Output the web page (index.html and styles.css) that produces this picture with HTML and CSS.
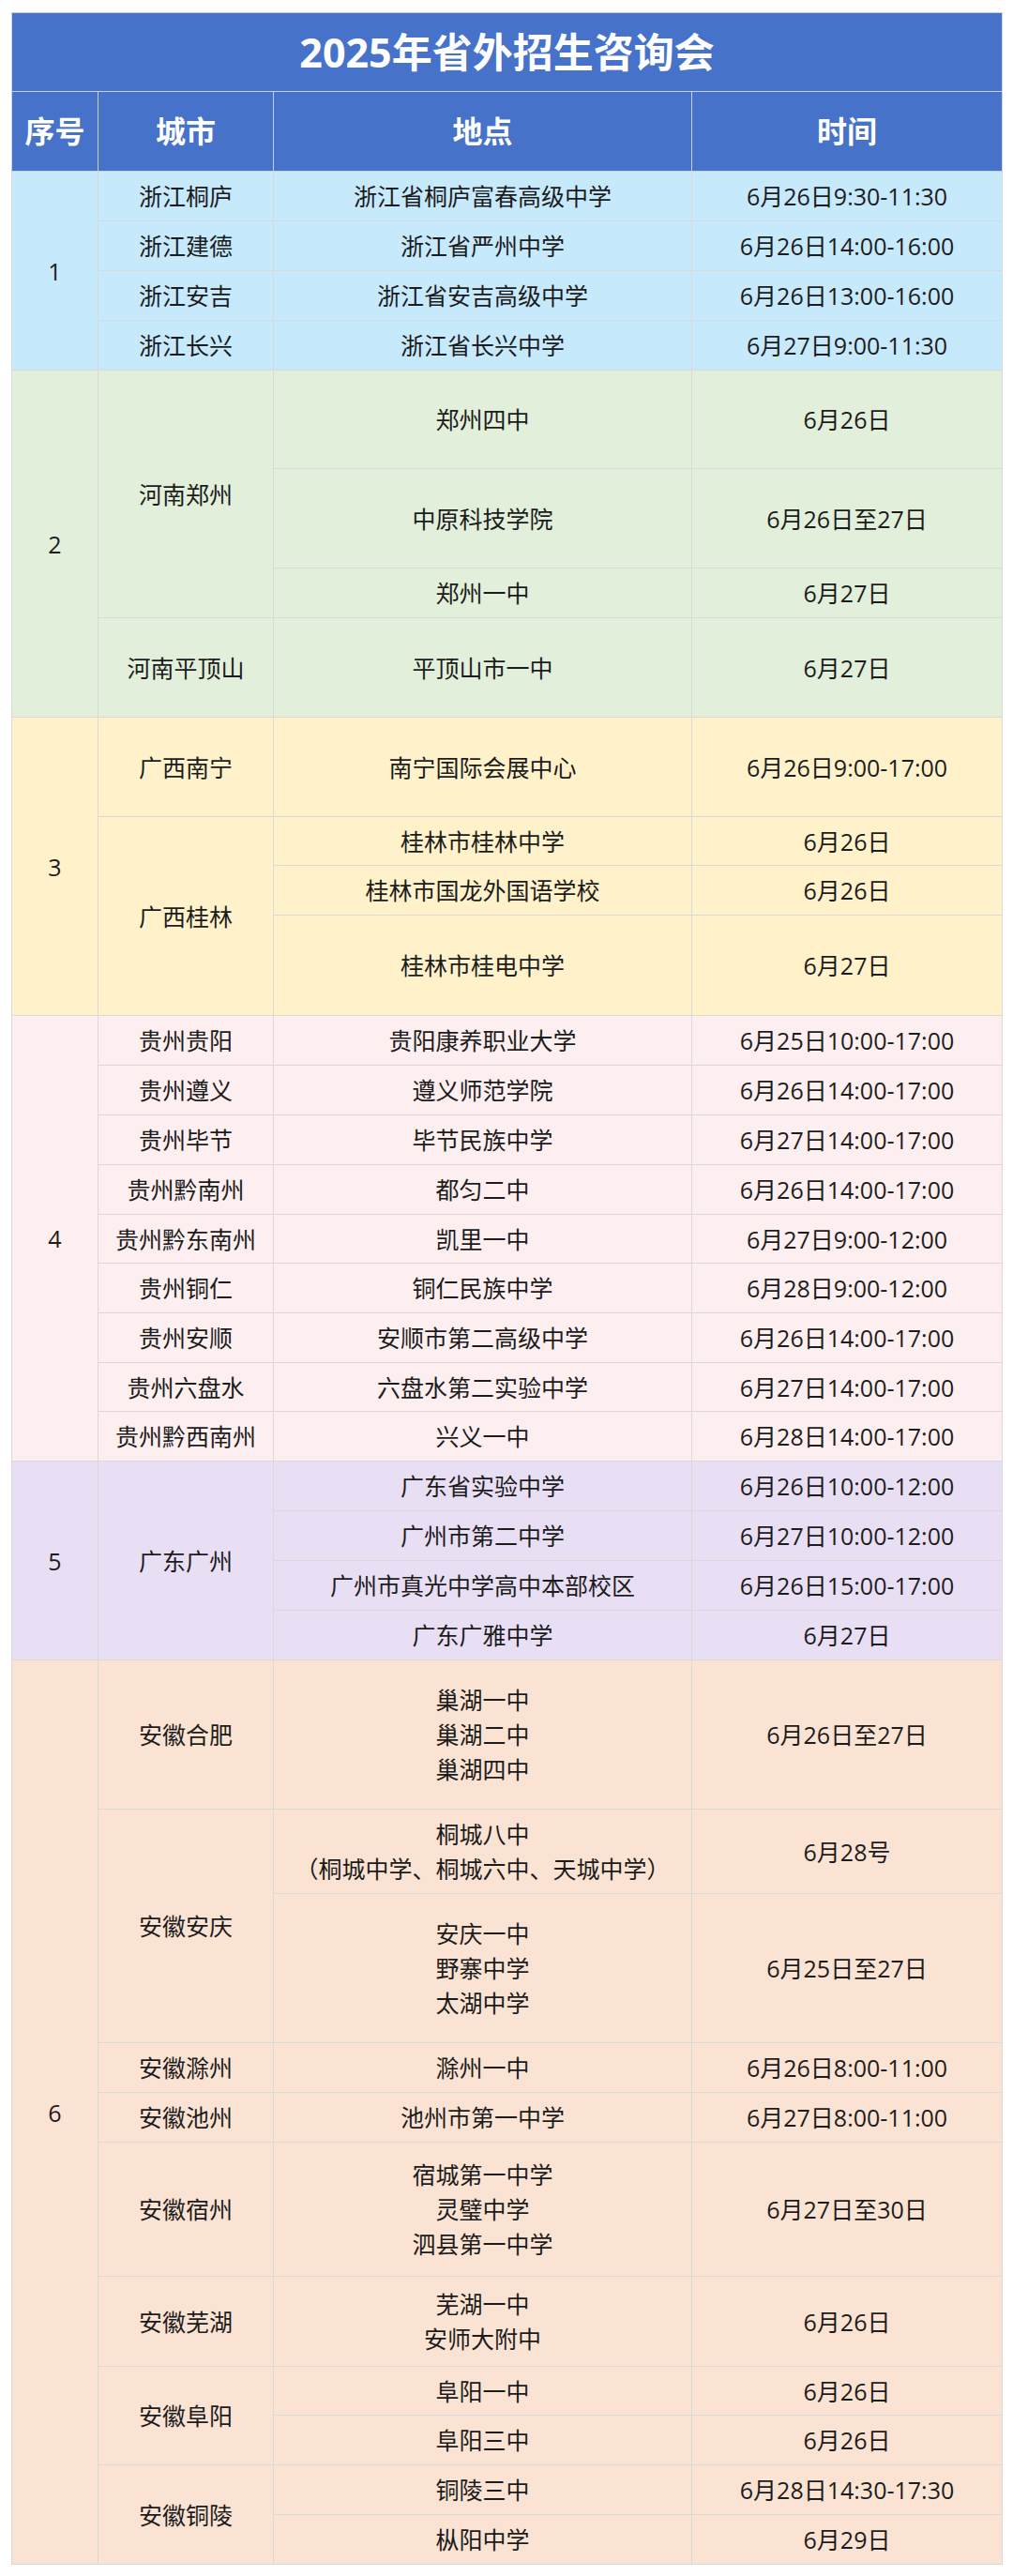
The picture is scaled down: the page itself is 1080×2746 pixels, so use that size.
FILE: index.html
```html
<!DOCTYPE html>
<html lang="zh-CN">
<head>
<meta charset="utf-8">
<title>2025年省外招生咨询会</title>
<link rel="stylesheet" href="styles.css">
</head>
<body>
<table class="sheet">
  <colgroup>
    <col class="c-no">
    <col class="c-city">
    <col class="c-place">
    <col class="c-time">
  </colgroup>
  <thead>
    <tr class="r-title"><th colspan="4" class="title">2025年省外招生咨询会</th></tr>
    <tr class="r-head"><th>序号</th><th>城市</th><th>地点</th><th>时间</th></tr>
  </thead>
  <tbody class="g1">
    <tr class="h53"><td rowspan="4">1</td><td>浙江桐庐</td><td>浙江省桐庐富春高级中学</td><td>6月26日9:30-11:30</td></tr>
    <tr class="h53"><td>浙江建德</td><td>浙江省严州中学</td><td>6月26日14:00-16:00</td></tr>
    <tr class="h53"><td>浙江安吉</td><td>浙江省安吉高级中学</td><td>6月26日13:00-16:00</td></tr>
    <tr class="h53"><td>浙江长兴</td><td>浙江省长兴中学</td><td>6月27日9:00-11:30</td></tr>
  </tbody>
  <tbody class="g2">
    <tr class="h105"><td rowspan="4">2</td><td rowspan="3">河南郑州</td><td>郑州四中</td><td>6月26日</td></tr>
    <tr class="h106"><td>中原科技学院</td><td>6月26日至27日</td></tr>
    <tr class="h53"><td>郑州一中</td><td>6月27日</td></tr>
    <tr class="h106"><td>河南平顶山</td><td>平顶山市一中</td><td>6月27日</td></tr>
  </tbody>
  <tbody class="g3">
    <tr class="h106"><td rowspan="4">3</td><td>广西南宁</td><td>南宁国际会展中心</td><td>6月26日9:00-17:00</td></tr>
    <tr class="h52"><td rowspan="3">广西桂林</td><td>桂林市桂林中学</td><td>6月26日</td></tr>
    <tr class="h53"><td>桂林市国龙外国语学校</td><td>6月26日</td></tr>
    <tr class="h107"><td>桂林市桂电中学</td><td>6月27日</td></tr>
  </tbody>
  <tbody class="g4">
    <tr class="h53"><td rowspan="9">4</td><td>贵州贵阳</td><td>贵阳康养职业大学</td><td>6月25日10:00-17:00</td></tr>
    <tr class="h53"><td>贵州遵义</td><td>遵义师范学院</td><td>6月26日14:00-17:00</td></tr>
    <tr class="h53"><td>贵州毕节</td><td>毕节民族中学</td><td>6月27日14:00-17:00</td></tr>
    <tr class="h53"><td>贵州黔南州</td><td>都匀二中</td><td>6月26日14:00-17:00</td></tr>
    <tr class="h52"><td>贵州黔东南州</td><td>凯里一中</td><td>6月27日9:00-12:00</td></tr>
    <tr class="h53"><td>贵州铜仁</td><td>铜仁民族中学</td><td>6月28日9:00-12:00</td></tr>
    <tr class="h53"><td>贵州安顺</td><td>安顺市第二高级中学</td><td>6月26日14:00-17:00</td></tr>
    <tr class="h52"><td>贵州六盘水</td><td>六盘水第二实验中学</td><td>6月27日14:00-17:00</td></tr>
    <tr class="h53"><td>贵州黔西南州</td><td>兴义一中</td><td>6月28日14:00-17:00</td></tr>
  </tbody>
  <tbody class="g5">
    <tr class="h53"><td rowspan="4">5</td><td rowspan="4">广东广州</td><td>广东省实验中学</td><td>6月26日10:00-12:00</td></tr>
    <tr class="h53"><td>广州市第二中学</td><td>6月27日10:00-12:00</td></tr>
    <tr class="h53"><td>广州市真光中学高中本部校区</td><td>6月26日15:00-17:00</td></tr>
    <tr class="h53"><td>广东广雅中学</td><td>6月27日</td></tr>
  </tbody>
  <tbody class="g6">
    <tr class="h159"><td rowspan="11">6</td><td>安徽合肥</td><td class="ml">巢湖一中<br>巢湖二中<br>巢湖四中</td><td>6月26日至27日</td></tr>
    <tr class="h90"><td rowspan="2">安徽安庆</td><td class="ml">桐城八中<br>（桐城中学、桐城六中、天城中学）</td><td>6月28号</td></tr>
    <tr class="h159"><td class="ml">安庆一中<br>野寨中学<br>太湖中学</td><td>6月25日至27日</td></tr>
    <tr class="h53"><td>安徽滁州</td><td>滁州一中</td><td>6月26日8:00-11:00</td></tr>
    <tr class="h53"><td>安徽池州</td><td>池州市第一中学</td><td>6月27日8:00-11:00</td></tr>
    <tr class="h143"><td>安徽宿州</td><td class="ml">宿城第一中学<br>灵璧中学<br>泗县第一中学</td><td>6月27日至30日</td></tr>
    <tr class="h96"><td>安徽芜湖</td><td class="ml">芜湖一中<br>安师大附中</td><td>6月26日</td></tr>
    <tr class="h52"><td rowspan="2">安徽阜阳</td><td>阜阳一中</td><td>6月26日</td></tr>
    <tr class="h53"><td>阜阳三中</td><td>6月26日</td></tr>
    <tr class="h53"><td rowspan="2">安徽铜陵</td><td>铜陵三中</td><td>6月28日14:30-17:30</td></tr>
    <tr class="h53"><td>枞阳中学</td><td>6月29日</td></tr>
  </tbody>
</table>
</body>
</html>
```

FILE: styles.css
```css
html, body {
  margin: 0;
  padding: 0;
  background: #ffffff;
}

body {
  font-family: "Open Sans", "Noto Sans CJK SC", sans-serif;
  color: #1c1c1c;
}

.sheet {
  margin: 13px 0 0 12px;
  width: 1056px;
  border-collapse: collapse;
  table-layout: fixed;
  border: 1px solid #cfcfcf;
}

.c-no { width: 92px; }
.c-city { width: 187px; }
.c-place { width: 446px; }
.c-time { width: 331px; }

.sheet th,
.sheet td {
  border: 1px solid #d9d9d9;
  padding: 0;
  text-align: center;
  vertical-align: middle;
  white-space: nowrap;
}

.sheet th {
  background: #4673c9;
  color: #ffffff;
  font-weight: 700;
  border-color: #c9d0dc;
}

.r-title { height: 84px; }
.r-head { height: 85px; }

.title {
  font-size: 43px;
  line-height: 1;
}

.r-head th {
  font-size: 32px;
  line-height: 1;
}

.sheet td {
  font-size: 25px;
  line-height: 30px;
}

.sheet td.ml {
  line-height: 37px;
}

.g1 td { background: #c7e9fc; }
.g2 td { background: #e2efda; }
.g3 td { background: #fff2cb; }
.g4 td { background: #fdeeef; }
.g5 td { background: #e9dff5; }
.g6 td { background: #fbe3d3; }

.h52 { height: 52px; }
.h53 { height: 53px; }
.h90 { height: 90px; }
.h96 { height: 96px; }
.h105 { height: 105px; }
.h106 { height: 106px; }
.h107 { height: 107px; }
.h143 { height: 143px; }
.h159 { height: 159px; }
```
